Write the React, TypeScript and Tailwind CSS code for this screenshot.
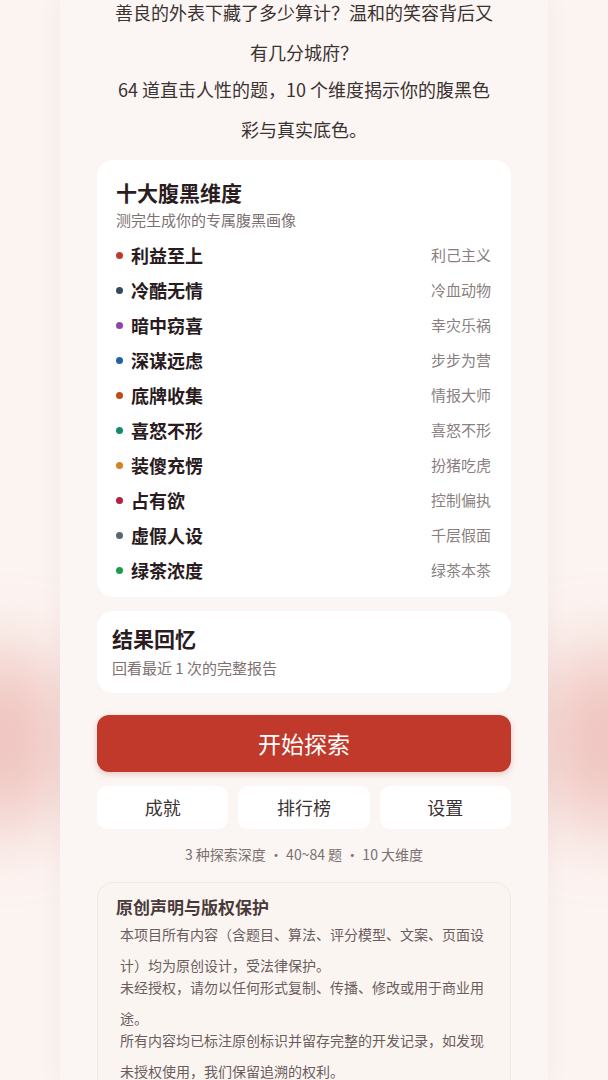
import React from 'react'

const FONT = { fontFamily: '"Noto Sans CJK SC", "Noto Sans", sans-serif' }

const dimensions = [
  { name: '利益至上', alias: '利己主义', dot: 'bg-[#c0392b]' },
  { name: '冷酷无情', alias: '冷血动物', dot: 'bg-[#34495e]' },
  { name: '暗中窃喜', alias: '幸灾乐祸', dot: 'bg-[#8e44ad]' },
  { name: '深谋远虑', alias: '步步为营', dot: 'bg-[#2160a8]' },
  { name: '底牌收集', alias: '情报大师', dot: 'bg-[#bf4a12]' },
  { name: '喜怒不形', alias: '喜怒不形', dot: 'bg-[#138a6c]' },
  { name: '装傻充愣', alias: '扮猪吃虎', dot: 'bg-[#d3831f]' },
  { name: '占有欲', alias: '控制偏执', dot: 'bg-[#b3213f]' },
  { name: '虚假人设', alias: '千层假面', dot: 'bg-[#5b6670]' },
  { name: '绿茶浓度', alias: '绿茶本茶', dot: 'bg-[#1e9a4c]' },
]

const notices = [
  '本项目所有内容（含题目、算法、评分模型、文案、页面设计）均为原创设计，受法律保护。',
  '未经授权，请勿以任何形式复制、传播、修改或用于商业用途。',
  '所有内容均已标注原创标识并留存完整的开发记录，如发现未授权使用，我们保留追溯的权利。',
]

export default function App() {
  return (
    <div className="relative h-[1080px] w-full overflow-hidden bg-[#fcf4f1]" style={FONT}>
      {/* 背景光晕 */}
      <div className="pointer-events-none absolute left-[-60px] top-[650px] h-[180px] w-[130px] rounded-full bg-[#e08a80]/45 blur-[36px]" />
      <div className="pointer-events-none absolute right-[-60px] top-[650px] h-[180px] w-[130px] rounded-full bg-[#e08a80]/45 blur-[36px]" />

      <div className="relative z-10 mx-auto flow-root h-full w-[488px] bg-[#fbf6f3] px-[37px] shadow-[0_0_24px_rgba(60,30,30,0.05)]">
        <div className="-mt-[8px] px-[13px] text-center text-[18px] leading-[40px] text-[#3b3232]">
          <p>善良的外表下藏了多少算计？温和的笑容背后又有几分城府？</p>
          <p className="-mt-[3px]">64 道直击人性的题，10 个维度揭示你的腹黑色彩与真实底色。</p>
        </div>

        <div className="mt-[11px] rounded-2xl bg-white pb-[9px] pl-[19px] pr-[20px] pt-[18px]">
          <h2 className="text-[21px] font-bold leading-[28px] text-[#2b1d1f]">十大腹黑维度</h2>
          <p className="mt-1 text-[15px] leading-[20px] text-[#7d7171]">测完生成你的专属腹黑画像</p>
          <ul className="mt-2">
            {dimensions.map((d) => (
              <li key={d.name} className="flex h-[35px] items-center">
                <span className={`mr-[8px] h-[7px] w-[7px] shrink-0 rounded-full ${d.dot}`} />
                <span className="text-[18px] font-bold text-[#2a1b1e]">{d.name}</span>
                <span className="ml-auto text-[15px] text-[#8a7f7f]">{d.alias}</span>
              </li>
            ))}
          </ul>
        </div>

        <div className="mt-[14px] rounded-2xl bg-white pb-[15px] pl-[15px] pt-[13px]">
          <h2 className="text-[21px] font-bold leading-[28px] text-[#2b1d1f]">结果回忆</h2>
          <p className="mt-[6px] text-[15px] leading-[20px] text-[#7d7171]">回看最近 1 次的完整报告</p>
        </div>

        <button className="mt-[22px] flex h-[57px] w-full items-center justify-center rounded-xl bg-[#c0392b] text-[23px] text-white shadow-[0_2px_6px_rgba(192,57,43,0.25)]">
          开始探索
        </button>

        <div className="mt-[14px] grid grid-cols-3 gap-[10px]">
          {['成就', '排行榜', '设置'].map((t) => (
            <button key={t} className="h-[43px] rounded-[10px] bg-white text-[18px] text-[#3a3333]">
              {t}
            </button>
          ))}
        </div>

        <p className="mt-[15px] text-center text-[14px] leading-[20px] text-[#7a7070]">
          3 种探索深度 · 40~84 题 · 10 大维度
        </p>

        <div className="mt-[18px] rounded-2xl border border-[#f3e8e4] bg-[#fbf5f2] pb-4 pl-[18px] pr-[20px] pt-[12px]">
          <h3 className="text-[17px] font-bold leading-[24px] text-[#4a3b3b]">原创声明与版权保护</h3>
          <div className="pl-1 text-[14px] leading-[31px] text-[#6b5d5d]">
            {notices.map((n, i) => (
              <p key={i} className={i > 0 ? '-mt-[9px]' : ''}>
                {n}
              </p>
            ))}
          </div>
        </div>
      </div>
    </div>
  )
}
